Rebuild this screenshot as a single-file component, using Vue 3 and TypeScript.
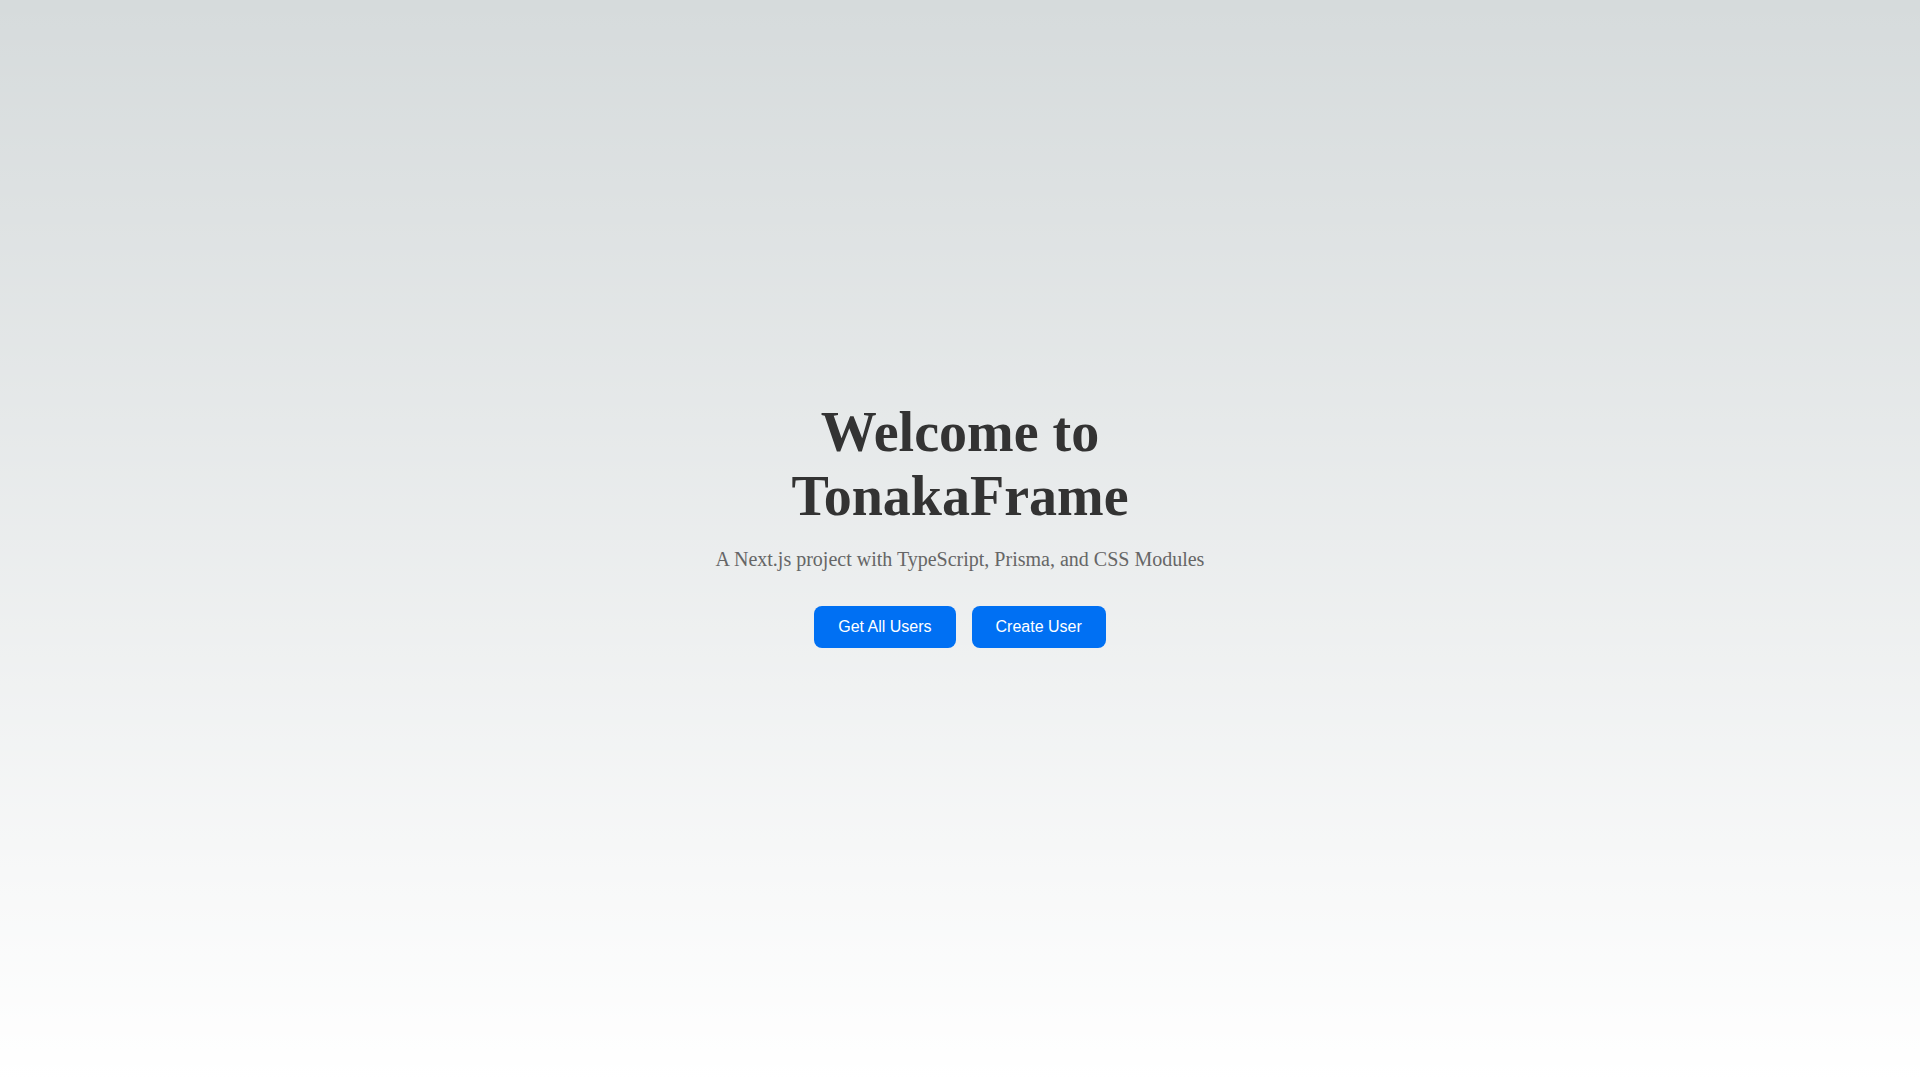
<script setup lang="ts">
interface Action {
  id: string
  label: string
}

const actions: Action[] = [
  { id: 'list', label: 'Get All Users' },
  { id: 'create', label: 'Create User' },
]
</script>

<template>
  <main class="container">
    <div class="content">
      <h1 class="title">Welcome to TonakaFrame</h1>
      <p class="description">A Next.js project with TypeScript, Prisma, and CSS Modules</p>
      <div class="actions">
        <button v-for="action in actions" :key="action.id" type="button" class="button">
          {{ action.label }}
        </button>
      </div>
    </div>
  </main>
</template>

<style>
body {
  margin: 0;
  background: linear-gradient(to bottom, transparent, rgb(255, 255, 255)) rgb(214, 219, 220);
}
</style>

<style scoped>
.container {
  box-sizing: border-box;
  display: flex;
  align-items: center;
  justify-content: center;
  min-height: 100vh;
  padding: 32px;
  font-family: "Liberation Serif", "Times New Roman", serif;
  text-align: center;
}

.content {
  max-width: 490px;
}

.title {
  margin: 0 0 16px;
  color: #333;
  font-size: 56px;
  line-height: 64px;
}

.description {
  margin: 0 0 32px;
  color: #666;
  font-size: 20px;
  line-height: 30px;
}

.actions {
  display: flex;
  justify-content: center;
  gap: 16px;
  margin-bottom: 32px;
}

.button {
  padding: 12px 24px;
  border: 0;
  border-radius: 8px;
  background: #0070f3;
  color: #fff;
  font-family: "Liberation Sans", Arial, sans-serif;
  font-size: 16px;
  line-height: 18px;
  cursor: pointer;
}
</style>
